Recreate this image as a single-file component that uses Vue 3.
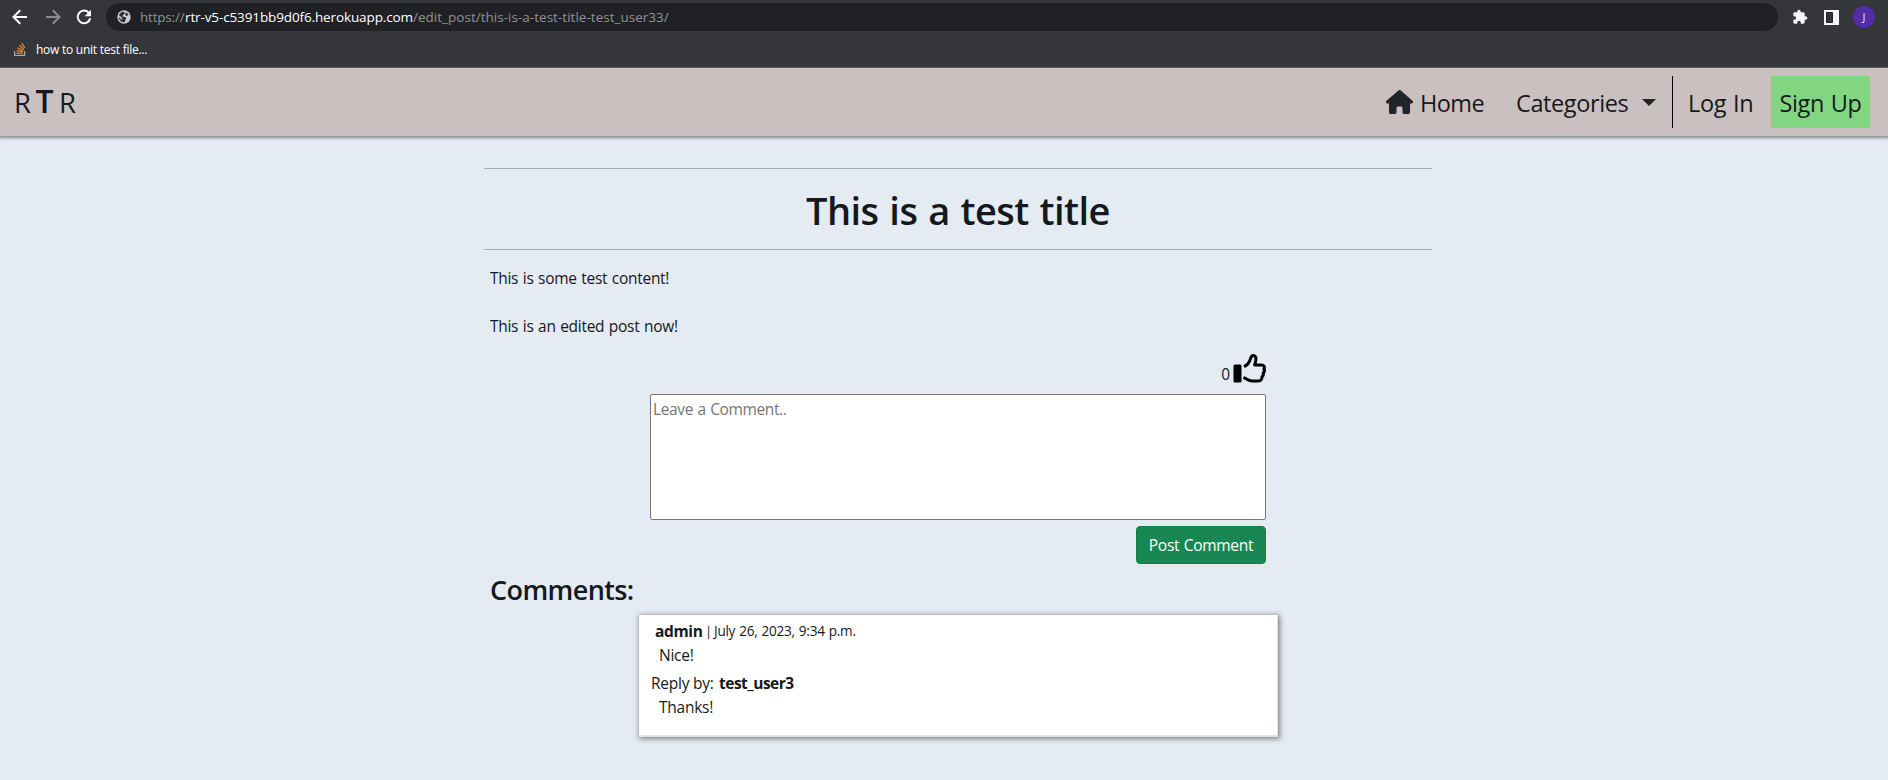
<script setup>
const comment = { author: 'admin', date: 'July 26, 2023, 9:34 p.m.', body: 'Nice!' }
const reply = { author: 'test_user3', body: 'Thanks!' }
</script>

<template>
  <div class="window">
    <header class="chrome">
      <div class="toolbar">
        <svg class="back" width="16" height="16" viewBox="0 0 16 16" fill="none" stroke="#fff" stroke-width="2"><path d="M15 8H2M8.2 1.3 1.5 8l6.7 6.7" /></svg>
        <svg class="forward" width="16" height="16" viewBox="0 0 16 16" fill="none" stroke="#8b8c8e" stroke-width="2"><path d="M1 8h13M7.8 1.3 14.5 8l-6.7 6.7" /></svg>
        <svg class="reload" width="16" height="16" viewBox="0 0 16 16"><path d="M13.2 4.3A6.3 6.3 0 1 0 14.2 9.2" fill="none" stroke="#fff" stroke-width="2" /><path d="M15 .8v6.4H8.6z" fill="#fff" /></svg>
        <div class="omnibox">
          <svg width="14" height="14" viewBox="0 0 14 14"><circle cx="7" cy="7" r="6.7" fill="#c9cbcd" /><path d="M5.8 1.8c1.6.3 2.3 1 1.6 2.2L5.6 5.2v1.5l2.5.2c1.5.4 1.2 1.8.4 2.5l-.7 2.8C4.500 12.600 2 10.400 1.600 7l3 2.800 1-.6L3.800 6.600 2 5.400C2.800 3.400 4 2.200 5.800 1.800zM9 2.300l2.700 2.500-2 1.100-1.500-1z" fill="#2b2c2f" /></svg>
          <div class="url"><span class="scheme">https://</span><span class="host">rtr-v5-c5391bb9d0f6.herokuapp.com</span><span class="path">/edit_post/this-is-a-test-title-test_user33/</span></div>
        </div>
        <svg class="puzzle" width="16" height="16" viewBox="0 0 24 24" fill="#f4f5f6"><path d="M20.500 11H19V7a2 2 0 0 0-2-2h-4V3.500a2.500 2.500 0 0 0-5 0V5H4a2 2 0 0 0-2 2v3.800h1.500a2.700 2.700 0 0 1 0 5.400H2V20a2 2 0 0 0 2 2h3.800v-1.500a2.700 2.700 0 0 1 5.400 0V22H17a2 2 0 0 0 2-2v-4h1.500a2.500 2.500 0 0 0 0-5z" /></svg>
        <svg class="panel" width="15" height="15" viewBox="0 0 15 15"><path d="M0 0h15v15H0z" fill="#f4f5f6" /><path d="M2.500 2.500h6v10h-6z" fill="#35363a" stroke="#202124" /></svg>
        <div class="avatar">J</div>
      </div>
      <div class="bookmarks">
        <svg width="12" height="14" viewBox="0 0 12 14" fill="none"><path d="M.6 9v4.400h10V9" stroke="#aaa" stroke-width="1.200" /><path d="M2.400 11.200h6.400M2.600 8.600l6.300 1.200M3.500 5.900l5.700 2.700M5.300 3.200l4.700 4M7.600 1l3.200 4.800" stroke="#e8832a" stroke-width="1.300" /></svg>
        <span>how to unit test file...</span>
      </div>
    </header>

    <nav class="navbar">
      <a class="brand"><span>R</span><b>T</b><span>R</span></a>
      <div class="links">
        <a class="home">
          <svg width="27" height="24" viewBox="0 0 576 512" fill="#212529"><path d="M575.800 255.500c0 18-15 32.100-32 32.100h-32l.7 160.200c0 2.700-.2 5.400-.5 8.100V472c0 22.100-17.900 40-40 40H392c-22 0-40-17.900-40-40v-88c0-17.700-14.300-32-32-32H256c-17.700 0-32 14.300-32 32v88c0 22.100-18 40-40 40H104c-22.100 0-40-17.900-40-40V287.600H32c-18 0-32-14-32-32.100 0-9 3-17 10-24L266.400 8c7-7 15-8 22-8s15 2 21 7l255.400 224.500c8 7 12 15 11 24z" /></svg>
          <span>Home</span>
        </a>
        <a class="categories"><span>Categories</span><i class="caret"></i></a>
        <i class="rule"></i>
        <a class="login"><span>Log In</span></a>
        <a class="signup"><span>Sign Up</span></a>
      </div>
    </nav>

    <main class="post">
      <hr />
      <h1><span>This is a test title</span></h1>
      <hr />
      <section class="content">
        <p class="first">This is some test content!</p>
        <p class="second">This is an edited post now!</p>
      </section>

      <section class="respond">
        <div class="likes">
          <span>0</span>
          <svg width="33" height="29" viewBox="0 0 33 29"><rect x=".5" y="10.500" width="8" height="18" rx="1.500" /><path d="M11 12.500c4-1.500 5.500-4.300 6.600-8C18.300 2 19 1.500 20.400 1.600c2.300.3 2.900 2.300 2.400 4.700L21.700 11h6.600c3 0 3.700 2.200 2.600 4 .8 1.200.5 3-.7 4 .5 1.400 0 2.800-1.200 3.700.2 2.700-1.400 4.400-4.200 4.400h-5.300c-4 0-5.500-2-9-3.900" fill="none" stroke="#000" stroke-width="3" stroke-linejoin="round" /></svg>
        </div>
        <textarea placeholder="Leave a Comment.."></textarea>
        <button type="button"><span>Post Comment</span></button>
      </section>

      <h3>Comments:</h3>
      <article class="card">
        <p class="meta"><b>{{ comment.author }}</b><span class="bar">|</span><small>{{ comment.date }}</small></p>
        <p class="nice">{{ comment.body }}</p>
        <p class="by"><span>Reply by:</span><b>{{ reply.author }}</b></p>
        <p class="thanks">{{ reply.body }}</p>
      </article>
    </main>
  </div>
</template>

<style>
html,
body {
  margin: 0;
  background: #e4ebf2;
}
</style>

<style scoped>
.window {
  height: 780px;
  overflow: hidden;
  background: #e4ebf2;
  color: #16191c;
  font: 400 15.500px/24px "Open Sans", "Noto Sans", sans-serif;
}
.window * { box-sizing: border-box; }
.window span, .window b, .window small, p { white-space: nowrap; }
p { margin: 0; }
svg { display: block; flex: none; }

.chrome {
  height: 68px;
  background: #35363a;
  border-bottom: 1px solid #606165;
}
.toolbar {
  display: flex;
  align-items: center;
  height: 34px;
  padding: 0 13px 0 12px;
}
.forward { margin-left: 17px; }
.reload { margin-left: 15px; }
.omnibox {
  display: flex;
  align-items: center;
  width: 1672px;
  height: 28px;
  margin-left: 14px;
  padding-left: 11px;
  border-radius: 14px;
  background: #202124;
}
.url {
  display: flex;
  margin-left: 9px;
  font-size: 13.500px;
  line-height: 26px;
}
.scheme { width: 45px; color: #8f9296; letter-spacing: -.2px; }
.host { width: 228px; color: #fff; letter-spacing: -.12px; }
.path { color: #8f9296; letter-spacing: .02px; }
.puzzle { margin-left: 14px; }
.panel { margin-left: 16px; }
.avatar {
  width: 22px;
  height: 22px;
  margin-left: 14px;
  border-radius: 50%;
  background: #512da8;
  color: #e6def5;
  font-size: 11px;
  line-height: 22px;
  text-align: center;
}
.bookmarks {
  display: flex;
  align-items: center;
  height: 30px;
  padding-left: 14px;
  color: #fff;
  font-size: 12px;
  letter-spacing: -.25px;
}
.bookmarks span { position: relative; top: .5px; margin-left: 10px; }

.navbar {
  position: relative;
  display: flex;
  align-items: center;
  justify-content: space-between;
  height: 68px;
  padding: 0 18px 0 14px;
  background: #cac0c0;
  box-shadow: 0 1px 3px 1px rgba(60, 75, 75, .6);
}
.brand {
  display: flex;
  align-items: baseline;
  font-size: 27.500px;
  font-weight: 400;
  line-height: 36px;
}
.brand span { width: 17px; }
.brand b { width: 29px; margin-left: -1px; font-size: 32px; font-weight: 600; text-align: center; }
.links {
  display: flex;
  align-items: center;
  font-size: 23.500px;
  font-weight: 400;
  line-height: 52px;
}
.links a { display: flex; align-items: center; height: 52px; }
.links a > span { position: relative; top: 1px; }
.home svg { margin-right: 7px; }
.home span { width: 96px; letter-spacing: -.6px; }
.categories { width: 156px; justify-content: space-between; padding-right: 16px; letter-spacing: -.4px; }
.caret {
  border: 7px solid transparent;
  border-top-color: #212529;
  border-bottom: 0;
}
.rule { width: 1px; height: 52px; background: #000; }
.login { width: 98px; padding-left: 15px; letter-spacing: -.3px; word-spacing: 1px; }
.signup { width: 99px; justify-content: center; background: #82d682; letter-spacing: -.4px; word-spacing: 1px; }

.post { width: 948px; margin: 0 auto 0 484px; padding-top: 32px; }
hr { height: 1px; margin: 0; border: 0; background: #a6acb3; }
h1 {
  margin: 0;
  padding: 17px 0 15px;
  font-size: 38px;
  font-weight: 600;
  line-height: 48px;
  text-align: center;
  letter-spacing: -.55px;
  word-spacing: 1.500px;
}
.content { padding: 16px 6px 0; letter-spacing: -.28px; word-spacing: .8px; }
.second { margin-top: 24px; }
.respond {
  display: flex;
  flex-direction: column;
  align-items: flex-end;
  width: 616px;
  margin: 16px 0 0 166px;
}
.likes { display: flex; gap: 3px; height: 40px; }
.likes span { margin-top: 8px; }
textarea {
  display: block;
  width: 616px;
  height: 126px;
  padding: 2px;
  border: 1px solid #767676;
  border-radius: 2px;
  background: #fff;
  resize: none;
  font: inherit;
  letter-spacing: -.37px;
  word-spacing: .8px;
}
textarea::placeholder { color: #757575; }
button {
  width: 130px;
  height: 38px;
  margin-top: 6px;
  padding: 0;
  border: 1px solid #128040;
  border-radius: 4px;
  background: #198754;
  color: #fff;
  font: inherit;
  letter-spacing: -.3px;
  word-spacing: .8px;
}
h3 {
  margin: 9px 0 0 6px;
  font-size: 27px;
  font-weight: 600;
  line-height: 34px;
  letter-spacing: -.6px;
}
.card {
  width: 639px;
  height: 122px;
  margin: 8px 0 0 155px;
  padding: 4px 12px 0;
  border: solid #dee2e6;
  border-width: 0 1px 2px 0;
  background: #fff;
  box-shadow: 1px 1px 5px 1px rgba(60, 68, 72, .6);
}
.meta { display: flex; padding-left: 4px; }
.meta b { width: 50px; font-weight: 700; letter-spacing: -.35px; }
.meta .bar { width: 9px; font-size: 13px; }
.meta small { font-size: 13.600px; letter-spacing: -.27px; word-spacing: .8px; }
.nice, .thanks { padding-left: 8px; letter-spacing: -.25px; }
.by { display: flex; margin-top: 4px; letter-spacing: -.25px; }
.by span { width: 68px; }
.by b { letter-spacing: -.5px; }
</style>
